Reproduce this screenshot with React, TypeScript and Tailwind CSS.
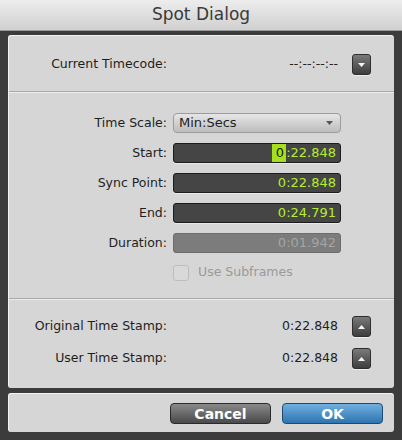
import React from "react";

const FONT = "font-['DejaVu_Sans','Liberation_Sans',sans-serif]";

function StepButton({ dir }: { dir: "up" | "down" }) {
  return (
    <div className="w-[19px] h-[21px] rounded-[3px] border border-[#2e2e2e] bg-gradient-to-b from-[#7a7a7a] to-[#3e3e3e] flex items-center justify-center shadow-[0_1px_0_#eee]">
      <svg width="9" height="6" viewBox="0 0 9 6">
        {dir === "down" ? (
          <polygon points="1,1 8,1 4.5,5" fill="#f4f4f4" />
        ) : (
          <polygon points="1,5 8,5 4.5,1" fill="#f4f4f4" />
        )}
      </svg>
    </div>
  );
}

function Label({ children }: { children: React.ReactNode }) {
  return <div className="w-[158px] text-right text-[12.5px] text-[#1e1e1e]">{children}</div>;
}

function TimeField({ value, highlight, disabled }: { value: string; highlight?: boolean; disabled?: boolean }) {
  if (disabled) {
    return (
      <div className="ml-[6px] w-[168px] h-[20px] rounded-[3px] bg-[#7c7c7c] border border-[#6c6c6c] flex items-center justify-end pr-[4px] text-[13px] text-[#a4a4a4]">
        {value}
      </div>
    );
  }
  return (
    <div className="ml-[6px] w-[168px] h-[20px] rounded-[3px] bg-[#454545] border border-[#1c1c1c] flex items-center justify-end pr-[4px] text-[13px] text-[#b4ee2c] shadow-[0_1px_0_#eaeaea]">
      {highlight ? (
        <>
          <span className="bg-[#a6e01c] text-[#1a1a1a] h-[18px] flex items-center pl-[4px] pr-[2px]">{value[0]}</span>
          <span>{value.slice(1)}</span>
        </>
      ) : (
        value
      )}
    </div>
  );
}

function Divider() {
  return (
    <div>
      <div className="h-px bg-[#a9a9a9]" />
      <div className="h-px bg-[#ececec]" />
    </div>
  );
}

function StampRow({ label, value, dir }: { label: string; value: string; dir: "up" | "down" }) {
  return (
    <div className="flex items-center h-[21px]">
      <Label>{label}</Label>
      <div className="flex-1 text-right text-[12.5px] text-[#222] pr-[14px]">{value}</div>
      <StepButton dir={dir} />
      <div className="w-[23px]" />
    </div>
  );
}

export default function App() {
  return (
    <div className={`w-[402px] h-[440px] bg-[#3c3c3c] flex flex-col ${FONT}`}>
      <div className="h-[31px] bg-gradient-to-b from-[#ededed] to-[#d0d0d0] flex items-center justify-center text-[17px] text-[#3a3a3a] border-b border-[#9a9a9a]">
        Spot Dialog
      </div>
      <div className="flex-1 px-[8px] pt-[4px] flex flex-col">
        <div className="h-[353px] bg-[#d6d6d6] rounded-[3px] flex flex-col border-t border-l border-[#f2f2f2]">
          <div className="h-[55px] pt-[18px]">
            <StampRow label="Current Timecode:" value="--:--:--:--" dir="down" />
          </div>
          <Divider />
          <div className="h-[205px] pt-[20px] flex flex-col gap-[10px]">
            <div className="flex items-center h-[20px]">
              <Label>Time Scale:</Label>
              <div className="ml-[6px] w-[168px] h-[20px] rounded-[4px] border border-[#9c9c9c] bg-gradient-to-b from-[#e6e6e6] to-[#bdbdbd] flex items-center justify-between pl-[5px] pr-[6px] text-[13px] text-[#1e1e1e]">
                <span>Min:Secs</span>
                <svg width="9" height="6" viewBox="0 0 9 6">
                  <polygon points="1,1 8,1 4.5,5" fill="#555" />
                </svg>
              </div>
            </div>
            <div className="flex items-center h-[20px]">
              <Label>Start:</Label>
              <TimeField value="0:22.848" highlight />
            </div>
            <div className="flex items-center h-[20px]">
              <Label>Sync Point:</Label>
              <TimeField value="0:22.848" />
            </div>
            <div className="flex items-center h-[20px]">
              <Label>End:</Label>
              <TimeField value="0:24.791" />
            </div>
            <div className="flex items-center h-[20px]">
              <Label>Duration:</Label>
              <TimeField value="0:01.942" disabled />
            </div>
            <div className="flex items-center h-[17px] mt-[1px]">
              <div className="w-[158px]" />
              <div className="ml-[6px] w-[16px] h-[16px] rounded-[3px] border border-[#bdbdbd] bg-[#d9d9d9]" />
              <span className="ml-[9px] text-[12.5px] text-[#9a9a9a]">Use Subframes</span>
            </div>
          </div>
          <Divider />
          <div className="flex-1 pt-[16px] flex flex-col gap-[11px]">
            <StampRow label="Original Time Stamp:" value="0:22.848" dir="up" />
            <StampRow label="User Time Stamp:" value="0:22.848" dir="up" />
          </div>
        </div>
        <div className="mt-[5px] h-[39px] bg-[#d6d6d6] rounded-[3px] border-t border-l border-[#f2f2f2] flex items-center justify-end gap-[11px] pr-[11px]">
          <button className="w-[101px] h-[21px] rounded-[4px] border border-[#2a2a2a] bg-gradient-to-b from-[#8a8a8a] to-[#4a4a4a] text-white text-[14px] font-bold">
            Cancel
          </button>
          <button className="w-[101px] h-[21px] rounded-[4px] border border-[#1e4a72] bg-gradient-to-b from-[#6fb0e0] to-[#2e74b0] text-white text-[14px] font-bold">
            OK
          </button>
        </div>
      </div>
    </div>
  );
}
